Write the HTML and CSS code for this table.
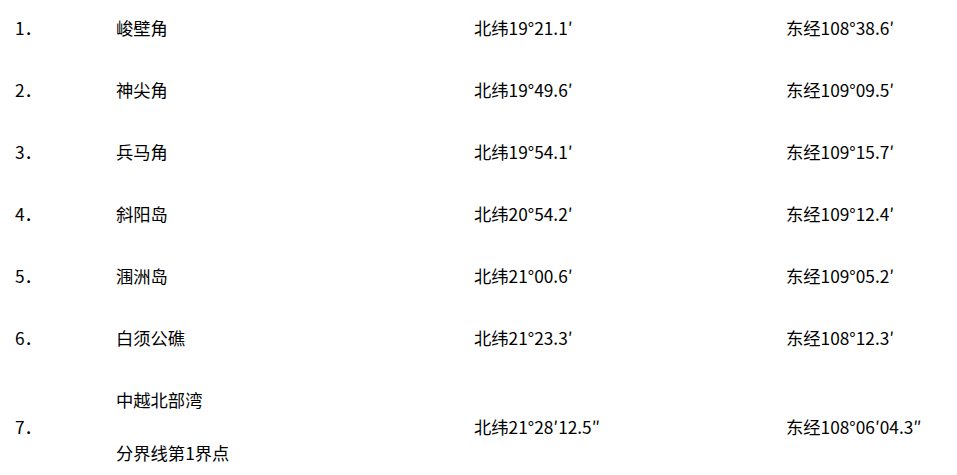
FILE: index.html
```html
<!DOCTYPE html>
<html lang="zh-CN">
<head>
    <meta charset="UTF-8">
    <meta name="viewport" content="width=device-width, initial-scale=1.0">
    <title>基点</title>
    <link rel="stylesheet" href="styles.css">
</head>
<body>
    <table class="points">
        <tr>
            <td class="num">1．</td>
            <td class="name">峻壁角</td>
            <td class="lat">北纬19°21.1′</td>
            <td class="lon">东经108°38.6′</td>
        </tr>
        <tr>
            <td class="num">2．</td>
            <td class="name">神尖角</td>
            <td class="lat">北纬19°49.6′</td>
            <td class="lon">东经109°09.5′</td>
        </tr>
        <tr>
            <td class="num">3．</td>
            <td class="name">兵马角</td>
            <td class="lat">北纬19°54.1′</td>
            <td class="lon">东经109°15.7′</td>
        </tr>
        <tr>
            <td class="num">4．</td>
            <td class="name">斜阳岛</td>
            <td class="lat">北纬20°54.2′</td>
            <td class="lon">东经109°12.4′</td>
        </tr>
        <tr>
            <td class="num">5．</td>
            <td class="name">涠洲岛</td>
            <td class="lat">北纬21°00.6′</td>
            <td class="lon">东经109°05.2′</td>
        </tr>
        <tr>
            <td class="num">6．</td>
            <td class="name">白须公礁</td>
            <td class="lat">北纬21°23.3′</td>
            <td class="lon">东经108°12.3′</td>
        </tr>
        <tr>
            <td class="num">7．</td>
            <td class="name">中越北部湾<br>分界线第1界点</td>
            <td class="lat">北纬21°28′12.5″</td>
            <td class="lon">东经108°06′04.3″</td>
        </tr>
    </table>
</body>
</html>
```

FILE: styles.css
```css
* {
    margin: 0;
    padding: 0;
}

body {
    background-color: #fff;
    color: #000;
    font-family: "Noto Sans CJK SC", "Noto Sans", sans-serif;
    font-size: 17.3px;
}

.points {
    border-collapse: collapse;
    margin-top: -3px;
}

.points td {
    padding: 4px 0 5px;
    line-height: 53px;
    vertical-align: middle;
    white-space: nowrap;
}

.num {
    width: 101px;
    padding-left: 15px !important;
}

.name {
    width: 358px;
}

.lat {
    width: 312px;
}
```
